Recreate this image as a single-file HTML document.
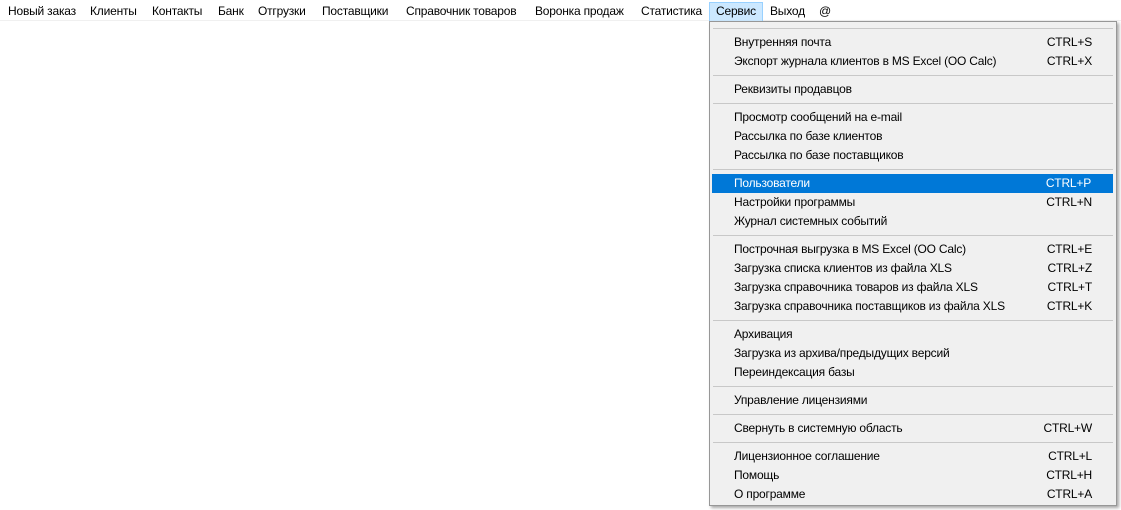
<!DOCTYPE html>
<html><head><meta charset="utf-8"><style>
*{margin:0;padding:0;box-sizing:border-box}
body{width:1121px;height:510px;background:#fff;font-family:"Liberation Sans",sans-serif;font-size:12px;color:#000;position:relative;overflow:hidden}
.bar{position:absolute;left:0;top:0;width:1121px;height:21px;border-bottom:1px solid #f0f0f0}
.bar span{position:absolute;top:4px;white-space:nowrap;letter-spacing:-0.2px}
.sel{position:absolute;left:709px;top:2px;width:54px;height:20px;background:#cce8ff;border:1px solid #99d1ff}
.menu{position:absolute;left:709px;top:21px;width:408px;height:485px;background:#f0f0f0;border:1px solid #979797;box-shadow:2px 2px 3px rgba(0,0,0,.35);padding:2px;letter-spacing:-0.2px}
.it{position:relative;height:19px;line-height:19px;padding-left:22px}
.it b{font-weight:normal;position:absolute;right:22px;top:0}
.it.h{background:#0078d7;color:#fff;margin-right:1px}
.sp{height:9px;position:relative}
.sp:after{content:"";position:absolute;left:1px;right:1px;top:4px;border-top:1px solid #c8c8c8}
</style></head><body>
<div class="bar">
<div class="sel"></div>
<span style="left:8px">Новый заказ</span>
<span style="left:90px">Клиенты</span>
<span style="left:152px">Контакты</span>
<span style="left:218px">Банк</span>
<span style="left:258px">Отгрузки</span>
<span style="left:322px">Поставщики</span>
<span style="left:406px">Справочник товаров</span>
<span style="left:535px">Воронка продаж</span>
<span style="left:641px">Статистика</span>
<span style="left:716px">Сервис</span>
<span style="left:770px">Выход</span>
<span style="left:819px">@</span>
</div>
<div class="menu">
<div class="sp"></div>
<div class="it">Внутренняя почта<b>CTRL+S</b></div>
<div class="it">Экспорт журнала клиентов в MS Excel (OO Calc)<b>CTRL+X</b></div>
<div class="sp"></div>
<div class="it">Реквизиты продавцов</div>
<div class="sp"></div>
<div class="it">Просмотр сообщений на e-mail</div>
<div class="it">Рассылка по базе клиентов</div>
<div class="it">Рассылка по базе поставщиков</div>
<div class="sp"></div>
<div class="it h">Пользователи<b>CTRL+P</b></div>
<div class="it">Настройки программы<b>CTRL+N</b></div>
<div class="it">Журнал системных событий</div>
<div class="sp"></div>
<div class="it">Построчная выгрузка в MS Excel (OO Calc)<b>CTRL+E</b></div>
<div class="it">Загрузка списка клиентов из файла XLS<b>CTRL+Z</b></div>
<div class="it">Загрузка справочника товаров из файла XLS<b>CTRL+T</b></div>
<div class="it">Загрузка справочника поставщиков из файла XLS<b>CTRL+K</b></div>
<div class="sp"></div>
<div class="it">Архивация</div>
<div class="it">Загрузка из архива/предыдущих версий</div>
<div class="it">Переиндексация базы</div>
<div class="sp"></div>
<div class="it">Управление лицензиями</div>
<div class="sp"></div>
<div class="it">Свернуть в системную область<b>CTRL+W</b></div>
<div class="sp"></div>
<div class="it">Лицензионное соглашение<b>CTRL+L</b></div>
<div class="it">Помощь<b>CTRL+H</b></div>
<div class="it">О программе<b>CTRL+A</b></div>
</div>
</body></html>
